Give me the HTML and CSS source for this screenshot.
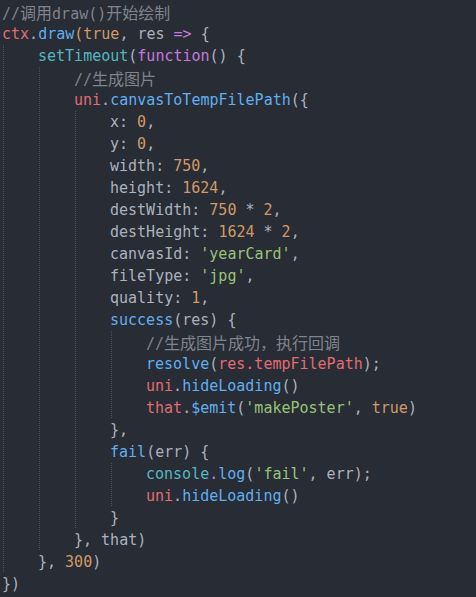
FILE: index.html
```html
<!DOCTYPE html>
<html>
<head>
<meta charset="utf-8">
<link rel="stylesheet" href="styles.css">
</head>
<body>
<div class="code">
<div class="ln"><span class="cm">//<span class="cjk">调用</span>draw()<span class="cjk">开始绘制</span></span></div>
<div class="ln"><span class="r">ctx</span>.<span class="b">draw</span><span class="o">(</span><span class="o">true</span>, res <span class="p">=&gt;</span> {</div>
<div class="ln"><span class="ind"></span><span class="c">setTimeout</span>(<span class="p">function</span>() {</div>
<div class="ln"><span class="ind"></span><span class="ind"></span><span class="cm">//<span class="cjk">生成图片</span></span></div>
<div class="ln"><span class="ind"></span><span class="ind"></span><span class="r">uni</span>.<span class="b">canvasToTempFilePath</span>({</div>
<div class="ln"><span class="ind"></span><span class="ind"></span><span class="ind"></span>x: <span class="o">0</span>,</div>
<div class="ln"><span class="ind"></span><span class="ind"></span><span class="ind"></span>y: <span class="o">0</span>,</div>
<div class="ln"><span class="ind"></span><span class="ind"></span><span class="ind"></span>width: <span class="o">750</span>,</div>
<div class="ln"><span class="ind"></span><span class="ind"></span><span class="ind"></span>height: <span class="o">1624</span>,</div>
<div class="ln"><span class="ind"></span><span class="ind"></span><span class="ind"></span>destWidth: <span class="o">750</span> * <span class="o">2</span>,</div>
<div class="ln"><span class="ind"></span><span class="ind"></span><span class="ind"></span>destHeight: <span class="o">1624</span> * <span class="o">2</span>,</div>
<div class="ln"><span class="ind"></span><span class="ind"></span><span class="ind"></span>canvasId: <span class="g">'yearCard'</span>,</div>
<div class="ln"><span class="ind"></span><span class="ind"></span><span class="ind"></span>fileType: <span class="g">'jpg'</span>,</div>
<div class="ln"><span class="ind"></span><span class="ind"></span><span class="ind"></span>quality: <span class="o">1</span>,</div>
<div class="ln"><span class="ind"></span><span class="ind"></span><span class="ind"></span><span class="b">success</span>(res) {</div>
<div class="ln"><span class="ind"></span><span class="ind"></span><span class="ind"></span><span class="ind"></span><span class="cm">//<span class="cjk">生成图片成功，执行回调</span></span></div>
<div class="ln"><span class="ind"></span><span class="ind"></span><span class="ind"></span><span class="ind"></span><span class="b">resolve</span>(<span class="r">res.tempFilePath</span>);</div>
<div class="ln"><span class="ind"></span><span class="ind"></span><span class="ind"></span><span class="ind"></span><span class="r">uni</span>.<span class="b">hideLoading</span>()</div>
<div class="ln"><span class="ind"></span><span class="ind"></span><span class="ind"></span><span class="ind"></span><span class="r">that</span>.<span class="b">$emit</span>(<span class="g">'makePoster'</span>, <span class="o">true</span>)</div>
<div class="ln"><span class="ind"></span><span class="ind"></span><span class="ind"></span>},</div>
<div class="ln"><span class="ind"></span><span class="ind"></span><span class="ind"></span><span class="b">fail</span>(err) {</div>
<div class="ln"><span class="ind"></span><span class="ind"></span><span class="ind"></span><span class="ind"></span><span class="c">console</span><span class="p">.</span><span class="b">log</span>(<span class="g">'fail'</span>, err);</div>
<div class="ln"><span class="ind"></span><span class="ind"></span><span class="ind"></span><span class="ind"></span><span class="r">uni</span>.<span class="b">hideLoading</span>()</div>
<div class="ln"><span class="ind"></span><span class="ind"></span><span class="ind"></span>}</div>
<div class="ln"><span class="ind"></span><span class="ind"></span>}, that)</div>
<div class="ln"><span class="ind"></span>}, <span class="o">300</span>)</div>
<div class="ln">})</div>
</div>
</body>
</html>
```
FILE: styles.css
```css
html, body {
  margin: 0;
  padding: 0;
  background: #282c34;
}
.code {
  padding: 1px 0 0 2px;
  font-family: "DejaVu Sans Mono", "Noto Sans CJK SC", monospace;
  font-size: 15px;
  color: #abb2bf;
}
.ln {
  height: 22px;
  line-height: 22px;
  white-space: pre;
}
.ind {
  display: inline-block;
  width: 36px;
  height: 22px;
  vertical-align: top;
  background: repeating-linear-gradient(to bottom, #4b5263 0 1px, transparent 1px 2px) no-repeat 1px 0 / 1px 100%;
}
.cjk {
  font-family: "Noto Sans CJK SC", sans-serif;
  font-size: 16px;
}
.cm { color: #7f848e; }
.r { color: #e06c75; }
.b { color: #61afef; }
.o { color: #d19a66; }
.p { color: #c678dd; }
.g { color: #98c379; }
.c { color: #56b6c2; }
```
